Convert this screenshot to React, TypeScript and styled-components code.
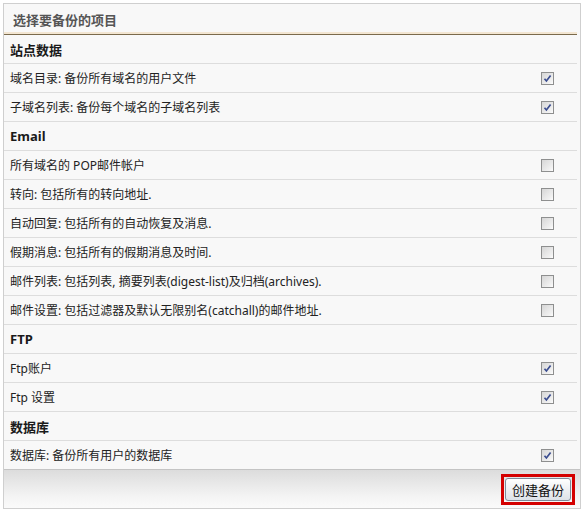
import React from "react";
import styled, { createGlobalStyle } from "styled-components";

type Item = { label: string; checked?: boolean };
type Section = { title: string; items: Item[] };

const sections: Section[] = [
  {
    title: "站点数据",
    items: [
      { label: "域名目录: 备份所有域名的用户文件", checked: true },
      { label: "子域名列表: 备份每个域名的子域名列表", checked: true },
    ],
  },
  {
    title: "Email",
    items: [
      { label: "所有域名的 POP邮件帐户" },
      { label: "转向: 包括所有的转向地址." },
      { label: "自动回复: 包括所有的自动恢复及消息." },
      { label: "假期消息: 包括所有的假期消息及时间." },
      { label: "邮件列表: 包括列表, 摘要列表(digest-list)及归档(archives)." },
      { label: "邮件设置: 包括过滤器及默认无限别名(catchall)的邮件地址." },
    ],
  },
  {
    title: "FTP",
    items: [
      { label: "Ftp账户", checked: true },
      { label: "Ftp 设置", checked: true },
    ],
  },
  {
    title: "数据库",
    items: [{ label: "数据库: 备份所有用户的数据库", checked: true }],
  },
];

const GlobalStyle = createGlobalStyle`
  html, body {
    margin: 0;
    padding: 0;
    background: #ffffff;
  }
  body {
    font-family: Tahoma, "Noto Sans", "Noto Sans CJK SC", sans-serif;
    font-size: 12px;
    color: #222222;
  }
`;

const Page = styled.div`
  padding: 3px 0 0 3px;
  width: 578px;
`;

const Panel = styled.div`
  border: 1px solid #cfcfcf;
  background: #f8f8f8;
  padding: 0 3px 0 0;
`;

const Title = styled.div`
  height: 30px;
  display: flex;
  align-items: center;
  padding-left: 9px;
  font-weight: bold;
  font-size: 13px;
  color: #555555;
  border-bottom: 1px solid #7a6a4c;
  box-shadow: inset 0 -2px 0 #f3e6d2;
`;

const Row = styled.div<{ $head?: boolean }>`
  height: 28px;
  display: flex;
  align-items: center;
  justify-content: space-between;
  padding-left: 6px;
  padding-right: 23px;
  border-bottom: 1px solid #dddddd;
  font-weight: ${(p) => (p.$head ? "bold" : "normal")};
  color: ${(p) => (p.$head ? "#1a1a1a" : "#222222")};
  font-size: ${(p) => (p.$head ? "13px" : "12px")};
`;

const Box = styled.span`
  width: 11px;
  height: 11px;
  border: 1px solid #8e8f8f;
  background: linear-gradient(135deg, #d6d6d6 0%, #f2f2f2 80%, #ffffff 100%);
  display: flex;
  align-items: center;
  justify-content: center;
`;

const Footer = styled.div`
  height: 38px;
  border-top: 1px solid #c4c4c4;
  margin-top: -1px;
  margin-right: -3px;
  background: linear-gradient(#dcdcdc, #f4f4f4 70%, #fafafa);
  display: flex;
  align-items: center;
  justify-content: flex-end;
  padding-right: 5px;
`;

const Highlight = styled.div`
  border: 3px solid #d40000;
  padding: 1px;
  display: flex;
`;

const Button = styled.button`
  font-family: "Noto Sans CJK SC", sans-serif;
  font-size: 13px;
  color: #111111;
  height: 23px;
  padding: 0 6px;
  border: 1px solid #7e8a99;
  border-radius: 3px;
  background: linear-gradient(#ffffff, #eef0f3 50%, #dde2e8);
  display: flex;
  align-items: center;
`;

function Check({ on }: { on?: boolean }) {
  return (
    <Box>
      {on && (
        <svg width="9" height="9" viewBox="0 0 9 9">
          <path
            d="M1.5 4.8 L3.4 7 L7.6 1.4"
            fill="none"
            stroke="#3b4d8f"
            strokeWidth="1.7"
          />
        </svg>
      )}
    </Box>
  );
}

export default function App() {
  return (
    <Page>
      <GlobalStyle />
      <Panel>
        <Title>选择要备份的项目</Title>
        {sections.map((s) => (
          <React.Fragment key={s.title}>
            <Row $head>{s.title}</Row>
            {s.items.map((it) => (
              <Row key={it.label}>
                <span>{it.label}</span>
                <Check on={it.checked} />
              </Row>
            ))}
          </React.Fragment>
        ))}
        <Footer>
          <Highlight>
            <Button>创建备份</Button>
          </Highlight>
        </Footer>
      </Panel>
    </Page>
  );
}
